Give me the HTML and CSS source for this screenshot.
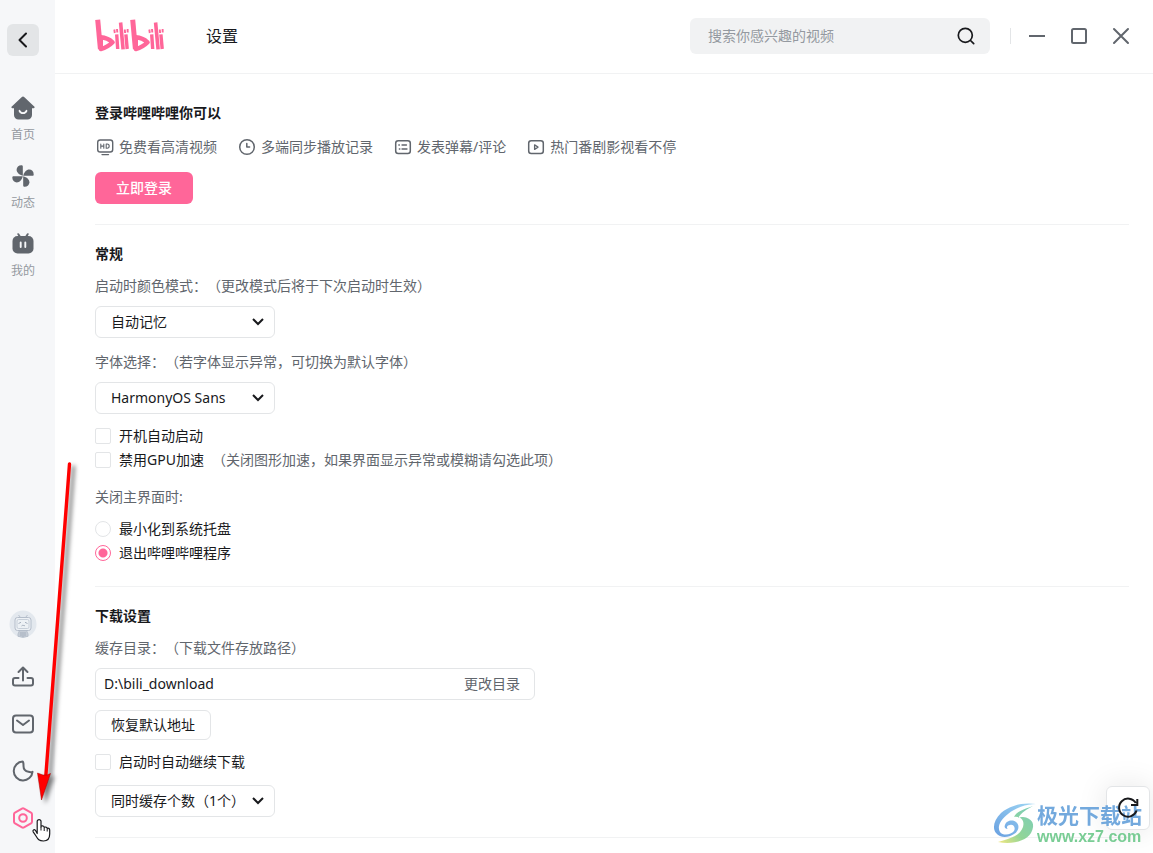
FILE: index.html
```html
<!DOCTYPE html>
<html lang="zh-CN">
<head>
<meta charset="utf-8">
<title>设置</title>
<link rel="stylesheet" href="styles.css">
</head>
<body>
<div class="app">
  <aside class="sidebar">
    <button class="back" type="button" aria-label="返回">
      <svg width="20" height="20" viewBox="0 0 20 20" fill="none" stroke="#18191c" stroke-width="2" stroke-linecap="round" stroke-linejoin="round"><path d="M13 3.500L6.500 10l6.500 6.500"/></svg>
    </button>
    <nav class="nav">
      <a class="nav-item" href="#home">
        <svg width="24" height="24" viewBox="0 0 24 24"><path fill="#61666d" d="M10.600 1.200a2 2 0 0 1 2.800 0l9.800 9.200a1 1 0 0 1-.7 1.800H21V19a4.500 4.500 0 0 1-4.500 4.500h-9A4.500 4.500 0 0 1 3 19v-6.800H1.500a1 1 0 0 1-.7-1.800z"/><path d="M8.500 14.800c1.200 3 5.800 3 7 0" fill="none" stroke="#f6f7f9" stroke-width="1.800" stroke-linecap="round"/></svg>
        <span>首页</span>
      </a>
      <a class="nav-item" href="#feed">
        <svg width="24" height="24" viewBox="0 0 24 24" fill="#61666d"><g id="blade"><path d="M11.800 11.800V2.500c0-.9-.6-1.200-1.400-1.200C7.600 1.300 5.600 3.300 5.600 5.800c0 2.600 2.600 5.200 6.200 6z"/></g><use href="#blade" transform="rotate(90 12 12)"/><use href="#blade" transform="rotate(180 12 12)"/><use href="#blade" transform="rotate(270 12 12)"/></svg>
        <span>动态</span>
      </a>
      <a class="nav-item" href="#mine">
        <svg width="24" height="24" viewBox="0 0 24 24"><path d="M7.300 2.200l2 3M16.700 2.200l-2 3" stroke="#61666d" stroke-width="2" stroke-linecap="round"/><rect x="1.500" y="4" width="21" height="17.500" rx="5" fill="#61666d"/><path d="M9.700 10.500v4.500M14.300 10.500v4.500" stroke="#f6f7f9" stroke-width="1.900" stroke-linecap="round"/></svg>
        <span>我的</span>
      </a>
    </nav>
    <div class="tools">
      <button class="tool avatar" type="button" aria-label="头像">
        <svg width="28" height="28" viewBox="0 0 28 28" fill="none"><circle cx="14" cy="14" r="13.500" fill="#e3e8ee"/><path d="M9.500 5l2 2.500M18.500 5l-2 2.500M9 24l1.500-3.500h7L19 24v2.300a13 13 0 0 1-10 0z" stroke="#b8c1cd" fill="#c5ccd6"/><rect x="6" y="7.500" width="16" height="13" rx="2.500" fill="#edf1f5" stroke="#b4bdca"/><rect x="8" y="9.500" width="12" height="9" rx="1.500" stroke="#c7cfd9"/><path d="M9.500 13.500l2.500-1.200M18.500 13.500L16 12.300M12.500 16l1-.8.700.8.700-.8 1 .8M12 22v4M14 22v5M16 22v4" stroke="#a7b1bf"/></svg>
      </button>
      <button class="tool" type="button" aria-label="上传">
        <svg width="24" height="24" viewBox="0 0 24 24" fill="none" stroke="#61666d" stroke-width="2" stroke-linecap="round" stroke-linejoin="round"><path d="M12 15.500V3M7.500 7L12 2.500 16.500 7M7.500 13H4a2 2 0 0 0-2 2v3.500a2 2 0 0 0 2 2h16a2 2 0 0 0 2-2V15a2 2 0 0 0-2-2h-3.500"/></svg>
      </button>
      <button class="tool" type="button" aria-label="消息">
        <svg width="24" height="24" viewBox="0 0 24 24" fill="none" stroke="#61666d" stroke-width="2" stroke-linecap="round" stroke-linejoin="round"><rect x="2" y="3.500" width="20" height="17" rx="3"/><path d="M6 8.500l6 4.500 6-4.500"/></svg>
      </button>
      <button class="tool" type="button" aria-label="深色模式">
        <svg width="24" height="24" viewBox="0 0 24 24" fill="none" stroke="#61666d" stroke-width="2" stroke-linejoin="round"><path d="M11.800 2.600a9.400 9.400 0 1 0 9.700 10.200c-1.200.5-2.600.4-4-.1-3.500-.6-5-2.700-5-5.700 0-1.600.2-3-.7-4.400z"/></svg>
      </button>
      <button class="tool" type="button" aria-label="设置">
        <svg width="24" height="24" viewBox="0 0 24 24" fill="none" stroke="#ff6699" stroke-width="2" stroke-linejoin="round"><path d="M11 2.600a2 2 0 0 1 2 0l7 4a2 2 0 0 1 1 1.700v7.400a2 2 0 0 1-1 1.700l-7 4a2 2 0 0 1-2 0l-7-4a2 2 0 0 1-1-1.700V8.300a2 2 0 0 1 1-1.700z"/><circle cx="12" cy="12" r="3.800"/></svg>
      </button>
    </div>
  </aside>

  <header class="header">
    <svg class="logo" role="img" aria-label="bilibili" width="70" height="33" viewBox="0 0 70 33" fill="none" stroke="#ff6699">
      <g id="half">
        <path d="M2.700 .8L5.400 30" stroke-width="5"/>
        <path d="M5.800 18.300C10 18.600 14.500 20.500 17.600 23.300 14.500 26.500 10 29 5.800 30z" stroke-width="4.400" stroke-linejoin="round"/>
        <path d="M21.700 15.300L22.700 30M30.900 15.300L32.200 30" stroke-width="3.400"/>
        <path d="M25.600 3.500L28.100 30.300" stroke-width="3.600"/>
        <path d="M19.300 10.500l.5 3.500M22 10l.3 3.500M29.800 10.500l.3 3.500M32.600 10l.1 3.500" stroke-width="1.900"/>
      </g>
      <use href="#half" x="35"/>
    </svg>
    <h1 class="title">设置</h1>
    <form class="search">
      <input type="search" placeholder="搜索你感兴趣的视频" aria-label="搜索">
      <button type="button" aria-label="搜索"><svg width="20" height="20" viewBox="0 0 20 20" fill="none" stroke="#18191c" stroke-width="1.700" stroke-linecap="round"><circle cx="9.300" cy="9.300" r="7"/><path d="M14.500 14.500l3.200 3.200"/></svg></button>
    </form>
    <div class="window">
      <button type="button" aria-label="最小化"><svg width="18" height="18" viewBox="0 0 18 18"><path d="M1 9h16" stroke="#61666d" stroke-width="2"/></svg></button>
      <button type="button" aria-label="最大化"><svg width="18" height="18" viewBox="0 0 18 18"><rect x="2" y="2" width="14" height="14" rx="1.500" fill="none" stroke="#61666d" stroke-width="2"/></svg></button>
      <button type="button" aria-label="关闭"><svg width="18" height="18" viewBox="0 0 18 18"><path d="M2 2l14 14M16 2L2 16" stroke="#61666d" stroke-width="2" stroke-linecap="round"/></svg></button>
    </div>
  </header>

  <main class="main">
    <section class="section">
      <h2>登录哔哩哔哩你可以</h2>
      <ul class="perks">
        <li><svg width="20" height="20" viewBox="0 0 20 20" fill="none" stroke="#61666d" stroke-width="1.400" stroke-linecap="round" stroke-linejoin="round"><rect x="2.700" y="3" width="15" height="12" rx="2.500"/><path d="M7 17.600h6.500"/><path d="M5.800 7v4.200M8.800 7v4.200M5.800 9.100h3M11.200 7v4.200h.9a2.100 2.100 0 0 0 0-4.200z" stroke-width="1.100"/></svg>免费看高清视频</li>
        <li><svg width="20" height="20" viewBox="0 0 20 20" fill="none" stroke="#61666d" stroke-width="1.500" stroke-linecap="round" stroke-linejoin="round"><circle cx="10" cy="10" r="7.300"/><path d="M9.800 6.500V10h2.800"/></svg>多端同步播放记录</li>
        <li><svg width="20" height="20" viewBox="0 0 20 20" fill="none" stroke="#61666d" stroke-width="1.500" stroke-linecap="round"><rect x="2.700" y="3.800" width="14.600" height="12.600" rx="2.500"/><path d="M9 8h4.500M9 12h5M5.800 8h.6M6.300 12h.6" stroke-width="1.300"/></svg>发表弹幕/评论</li>
        <li><svg width="20" height="20" viewBox="0 0 20 20" fill="none" stroke="#61666d" stroke-width="1.500" stroke-linejoin="round"><rect x="2.700" y="3.800" width="14.600" height="12.600" rx="2.500"/><path d="M8.600 7.800l3.400 2.300-3.400 2.300z" stroke-width="1.300"/></svg>热门番剧影视看不停</li>
      </ul>
      <button class="login" type="button">立即登录</button>
    </section>

    <section class="section">
      <h2>常规</h2>
      <label class="label first" for="mode">启动时颜色模式：（更改模式后将于下次启动时生效）</label>
      <div class="select">
        <select id="mode"><option>自动记忆</option></select>
        <svg width="14" height="10" viewBox="0 0 14 10"><path d="M2 2l5 5 5-5" fill="none" stroke="#18191c" stroke-width="2"/></svg>
      </div>
      <label class="label" for="font">字体选择：（若字体显示异常，可切换为默认字体）</label>
      <div class="select">
        <select id="font"><option>HarmonyOS Sans</option></select>
        <svg width="14" height="10" viewBox="0 0 14 10"><path d="M2 2l5 5 5-5" fill="none" stroke="#18191c" stroke-width="2"/></svg>
      </div>
      <div class="choices">
        <label class="choice"><input type="checkbox">开机自动启动</label>
        <label class="choice"><input type="checkbox">禁用GPU加速<span class="hint">（关闭图形加速，如果界面显示异常或模糊请勾选此项）</span></label>
      </div>
      <fieldset class="closing">
        <legend>关闭主界面时:</legend>
        <div class="choices">
          <label class="choice"><input type="radio" name="close">最小化到系统托盘</label>
          <label class="choice"><input type="radio" name="close" checked>退出哔哩哔哩程序</label>
        </div>
      </fieldset>
    </section>

    <section class="section">
      <h2>下载设置</h2>
      <label class="label first" for="dir">缓存目录：（下载文件存放路径）</label>
      <div class="path">
        <input id="dir" type="text" value="D:\bili_download">
        <button type="button">更改目录</button>
      </div>
      <button class="reset" type="button">恢复默认地址</button>
      <div class="choices">
        <label class="choice"><input type="checkbox">启动时自动继续下载</label>
      </div>
      <div class="select count">
        <select aria-label="同时缓存个数"><option>同时缓存个数（1个）</option></select>
        <svg width="14" height="10" viewBox="0 0 14 10"><path d="M2 2l5 5 5-5" fill="none" stroke="#18191c" stroke-width="2"/></svg>
      </div>
    </section>
  </main>
</div>

<button class="reload" type="button" aria-label="刷新"></button>
<div class="brand">
  <svg width="44" height="42" viewBox="0 0 44 42">
    <defs>
      <linearGradient id="sky" x1="1" y1="0" x2="0" y2="1"><stop offset="0" stop-color="#8fd0f2"/><stop offset="1" stop-color="#4f90dc"/></linearGradient>
      <linearGradient id="leaf" x1="1" y1="0" x2="0" y2="1"><stop offset="0" stop-color="#62c3b0"/><stop offset=".6" stop-color="#80cf86"/><stop offset="1" stop-color="#f2e36a"/></linearGradient>
    </defs>
    <path fill="url(#sky)" d="M43 1C33 1 22 5 15 11c-8 6-11 13-8 18 3 4 11 3 14-1 2-4-1-7-4-6-3 0-4 3-2 4-3 0-4-2-3-4 1-4 7-6 11-3 4 3 3 9-2 12-6 4-14 4-18-1C-1 25 1 17 8 10 17 2 31-1 43 1z"/>
    <path fill="url(#leaf)" d="M40 3C31 6 23 9 21 14c7-1 11 4 9 10-3 8-10 11-25 15 14 3 28-1 33-9 5-9 1-15-8-16-2 0-3 0-5 1 3-5 9-9 15-12z"/>
  </svg>
  <div class="brand-text"><span class="brand-name">极光下载站</span><span class="brand-url">www.xz7.com</span></div>
</div>
<svg class="reload-icon" width="24" height="24" viewBox="0 0 24 24" fill="none" stroke="#18191c" stroke-width="2"><path d="M20.600 14.500a9 9 0 1 1-.8-7.500M21.300 3v6h-6.300"/></svg>

<svg class="arrow" width="50" height="350" viewBox="0 0 50 350">
  <path d="M35.500 4L11.500 320" stroke="#ff0000" stroke-width="3.400" stroke-linecap="round"/>
  <path d="M3.500 313l5.500 2h4l3.500-1.500L7.500 340z" fill="#ff0000" stroke="#a00000" stroke-width=".5"/>
</svg>
<svg class="pointer" width="20" height="26" viewBox="0 0 20 26"><path d="M6.200 16.500V4a2 2 0 0 1 3.800 0v6c0-1.600 3.200-1.600 3.200.6.500-1 3-.8 3 1 .7-.7 2.500-.4 2.500 1.400v4c0 4-2.200 7-6.200 7-4.500 0-5.500-1.500-7.500-5l-2.800-4.200c-1-1.700 1-2.800 2.200-1.500z" fill="#fff" stroke="#18191c" stroke-width="1.200" stroke-linejoin="round"/><path d="M10 10v3.500M13.200 11v3M16.200 12v2.500" stroke="#18191c"/></svg>
</body>
</html>
```
FILE: styles.css
```css
* {
  box-sizing: border-box;
}

body {
  margin: 0;
  overflow: hidden;
  background: #fff;
  color: #18191c;
  font-family: "Noto Sans", "Noto Sans CJK SC", sans-serif;
  font-size: 14px;
  line-height: 20px;
  text-spacing-trim: space-all;
}

button,
input,
select {
  margin: 0;
  padding: 0;
  border: 0;
  background: none;
  color: inherit;
  font: inherit;
}

svg {
  display: block;
  flex: none;
}

.app {
  display: grid;
  grid-template-columns: 55px 1fr;
  grid-template-rows: auto 1fr;
  height: 100vh;
}

.sidebar {
  grid-row: 1 / 3;
  display: flex;
  flex-direction: column;
  padding: 24px 8px 23px 7px;
  background: #f6f7f9;
}

.back {
  display: grid;
  place-items: center;
  width: 32px;
  height: 32px;
  border-radius: 6px;
  background: #e3e5e7;
}

.nav {
  display: flex;
  flex-direction: column;
  gap: 21px;
  width: 32px;
  margin-top: 40px;
}

.nav-item {
  display: flex;
  flex-direction: column;
  align-items: center;
  gap: 7px;
  color: #9499a0;
  font-size: 12px;
  line-height: 16px;
  text-decoration: none;
}

.tools {
  display: flex;
  flex-direction: column;
  gap: 23px;
  width: 32px;
  margin-top: auto;
}

.tool {
  display: grid;
  place-items: center;
}

.avatar {
  margin-bottom: 4px;
}

.header {
  display: flex;
  align-items: center;
  height: 74px;
  padding: 0 23px 2px 40px;
  border-bottom: 1px solid #f1f2f3;
}

.title {
  margin: 0 auto 0 41px;
  font-size: 16px;
  font-weight: 400;
  line-height: 24px;
}

.search {
  display: flex;
  align-items: center;
  width: 300px;
  height: 36px;
  padding: 0 14px 0 18px;
  border-radius: 6px;
  background: #f1f2f3;
}

.search input {
  flex: 1;
  min-width: 0;
  outline: 0;
}

.search input::placeholder {
  color: #9499a0;
  opacity: 1;
}

.window {
  display: flex;
  align-items: center;
  gap: 24px;
  margin-left: 20px;
  padding-left: 18px;
  background: linear-gradient(#e3e5e7, #e3e5e7) left center / 1px 16px no-repeat;
}

.main {
  padding: 10px 24px 0 40px;
  overflow: hidden;
}

.section {
  padding: 19px 0 20px;
  border-bottom: 1px solid #f1f2f3;
}

.section h2 {
  margin: 0;
  font-size: 14px;
  font-weight: 700;
  line-height: 20px;
}

.perks {
  display: flex;
  flex-wrap: wrap;
  gap: 20px;
  margin: 14px 0 15px;
  padding: 0;
  color: #61666d;
  list-style: none;
}

.perks li {
  display: flex;
  gap: 4px;
}

.login {
  width: 98px;
  height: 32px;
  border-radius: 6px;
  background: #ff6699;
  color: #fff;
  font-weight: 500;
}

.label {
  display: block;
  margin: 14px 0 10px;
  color: #61666d;
}

.label.first {
  margin-top: 12px;
}

.select {
  display: grid;
  align-items: center;
  width: 180px;
}

.select select,
.select svg {
  grid-area: 1 / 1;
}

.select select {
  width: 100%;
  height: 32px;
  padding: 0 24px 0 15px;
  border: 1px solid #e3e5e7;
  border-radius: 6px;
  appearance: none;
}

.select svg {
  justify-self: end;
  margin-right: 10px;
  pointer-events: none;
}

.count {
  margin-top: 13px;
}

.choices {
  display: flex;
  flex-direction: column;
  gap: 4px;
  margin-top: 12px;
}

.choice {
  display: flex;
  align-items: center;
}

.choice input {
  flex: none;
  width: 16px;
  height: 16px;
  margin-right: 8px;
  border: 1px solid #e3e5e7;
  border-radius: 2px;
  appearance: none;
}

.choice input[type="radio"] {
  border-radius: 50%;
}

.choice input[type="radio"]:checked {
  border-color: #ff6699;
  background: radial-gradient(circle, #ff6699 4px, transparent 5px);
}

.hint {
  margin-left: 8px;
  color: #61666d;
}

.closing {
  margin: 17px 0 3px;
  padding: 0;
  border: 0;
}

.closing legend {
  padding: 0;
  color: #61666d;
}

.path {
  display: flex;
  width: 440px;
  height: 32px;
  padding: 0 14px 0 8px;
  border: 1px solid #e3e5e7;
  border-radius: 6px;
}

.path input {
  flex: 1;
  min-width: 0;
}

.path button {
  color: #61666d;
}

.reset {
  display: block;
  height: 30px;
  margin-top: 10px;
  padding: 0 15px;
  border: 1px solid #e3e5e7;
  border-radius: 6px;
}

.reload {
  position: fixed;
  right: 3px;
  bottom: 23px;
  width: 44px;
  height: 44px;
  border: 1px solid #e3e5e7;
  border-radius: 6px;
  background: #fff;
  box-shadow: 0 0 30px rgba(0, 0, 0, .1);
}

.reload-icon {
  position: fixed;
  right: 13px;
  bottom: 33px;
  pointer-events: none;
}

.brand {
  position: fixed;
  right: 11px;
  bottom: 6px;
  display: flex;
  opacity: .85;
  pointer-events: none;
}

.brand-text {
  display: flex;
  flex-direction: column;
  font-weight: 700;
  white-space: nowrap;
}

.brand-name {
  color: #5b9bd8;
  font-size: 21px;
  line-height: 24px;
}

.brand-url {
  color: #63c583;
  font-family: "Liberation Sans", sans-serif;
  font-size: 16px;
  line-height: 20px;
}

.arrow {
  position: fixed;
  top: 460px;
  left: 34px;
  filter: drop-shadow(4px 3px 2px rgba(0, 0, 0, .5));
  pointer-events: none;
}

.pointer {
  position: fixed;
  top: 817px;
  left: 31px;
  pointer-events: none;
}
```
